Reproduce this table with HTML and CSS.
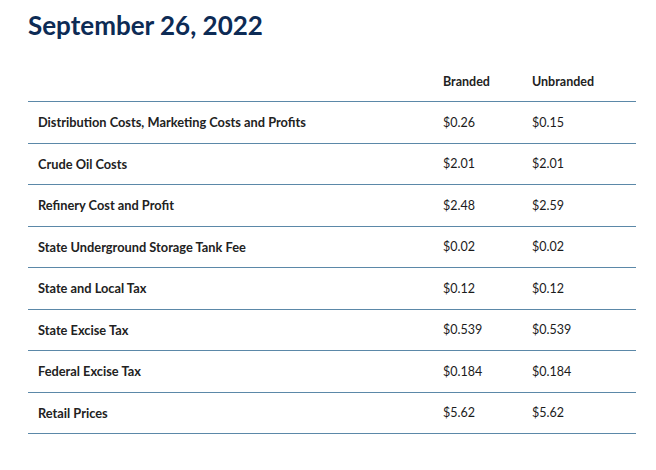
FILE: index.html
```html
<!DOCTYPE html>
<html>
<head>
<meta charset="utf-8">
<link rel="stylesheet" href="styles.css">
</head>
<body>
<div class="page">
  <h1 class="title">September 26, 2022</h1>
  <table class="prices">
    <colgroup>
      <col class="c-label">
      <col class="c-brand">
      <col class="c-unbrand">
    </colgroup>
    <thead>
      <tr><th></th><th>Branded</th><th>Unbranded</th></tr>
    </thead>
    <tbody>
      <tr><td class="label">Distribution Costs, Marketing Costs and Profits</td><td>$0.26</td><td>$0.15</td></tr>
      <tr><td class="label">Crude Oil Costs</td><td>$2.01</td><td>$2.01</td></tr>
      <tr><td class="label">Refinery Cost and Profit</td><td>$2.48</td><td>$2.59</td></tr>
      <tr><td class="label">State Underground Storage Tank Fee</td><td>$0.02</td><td>$0.02</td></tr>
      <tr><td class="label">State and Local Tax</td><td>$0.12</td><td>$0.12</td></tr>
      <tr><td class="label">State Excise Tax</td><td>$0.539</td><td>$0.539</td></tr>
      <tr><td class="label">Federal Excise Tax</td><td>$0.184</td><td>$0.184</td></tr>
      <tr><td class="label">Retail Prices</td><td>$5.62</td><td>$5.62</td></tr>
    </tbody>
  </table>
</div>
</body>
</html>
```

FILE: styles.css
```css
html, body {
  margin: 0;
  padding: 0;
  background: #ffffff;
}
.page {
  padding: 8px 20px 0 28px;
  font-family: "Lato", "Liberation Sans", sans-serif;
  color: #1b1b1b;
}
.title {
  margin: 0;
  font-family: "Lato", sans-serif;
  font-weight: 700;
  font-size: 26px;
  line-height: 34px;
  color: #0d2b55;
}
.prices {
  width: 608px;
  border-collapse: collapse;
  margin-top: 19px;
  font-size: 12.5px;
}
.c-label { width: 405px; }
.c-brand { width: 89px; }
.c-unbrand { width: 114px; }
.prices th {
  text-align: left;
  font-weight: 700;
  padding: 0 10px;
  height: 40px;
  border-bottom: 1px solid #5b88a8;
  color: #222222;
}
.prices td {
  text-align: left;
  padding: 0 10px;
  height: 40.5px;
  border-bottom: 1px solid #5b88a8;
  font-weight: 400;
}
.prices td.label {
  font-weight: 700;
  font-size: 12.8px;
  color: #222222;
}
```
